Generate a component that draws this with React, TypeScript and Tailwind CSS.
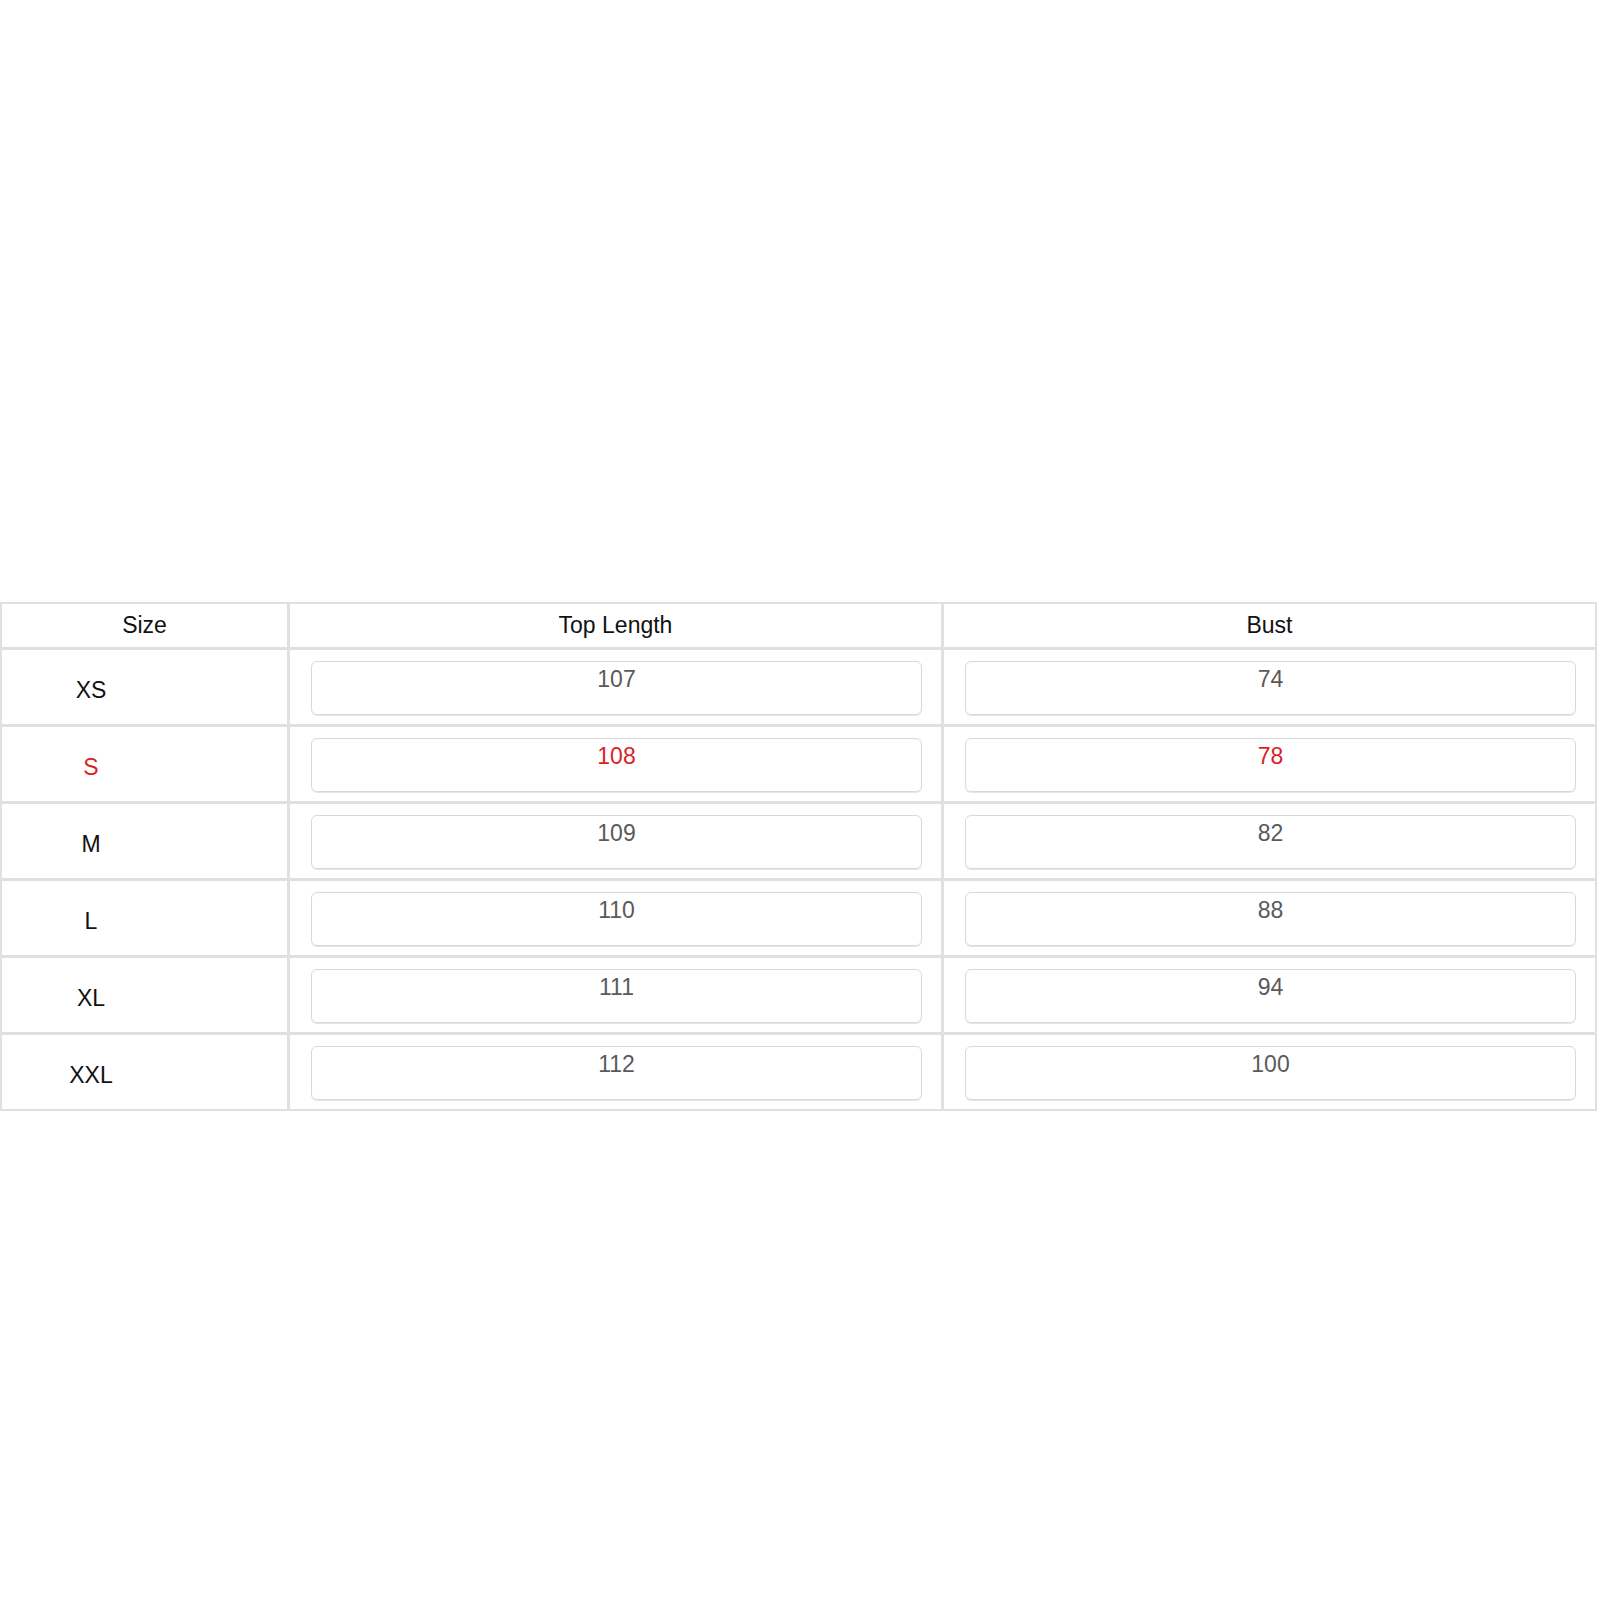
import React from "react";

type Row = { size: string; length: string; bust: string; hl?: boolean };

const rows: Row[] = [
  { size: "XS", length: "107", bust: "74" },
  { size: "S", length: "108", bust: "78", hl: true },
  { size: "M", length: "109", bust: "82" },
  { size: "L", length: "110", bust: "88" },
  { size: "XL", length: "111", bust: "94" },
  { size: "XXL", length: "112", bust: "100" },
];

function ValueBox({ value, hl }: { value: string; hl?: boolean }) {
  return (
    <div className="bg-white h-[74px] pl-[21px] pt-[11px]">
      <div
        className={
          "w-[611px] h-[54px] border border-[#d9d9d9] rounded-[6px] pt-[4px] text-center text-[23px] leading-[26px] shadow-[0_1px_0_#e6e6e6] " +
          (hl ? "text-[#dc1f26]" : "text-[#5a5a5a]")
        }
      >
        {value}
      </div>
    </div>
  );
}

export default function App() {
  return (
    <div
      className="w-[1600px] h-[1600px] bg-white pt-[602px]"
      style={{ fontFamily: '"Liberation Sans", Arial, sans-serif' }}
    >
      <div className="w-[1597px] bg-[#e0e0e0] p-[2px] grid grid-cols-[285px_651px_651px] gap-[3px]">
        <div className="bg-white h-[43px] flex items-center justify-center text-[23px] text-[#111111]">
          Size
        </div>
        <div className="bg-white h-[43px] flex items-center justify-center text-[23px] text-[#111111]">
          Top Length
        </div>
        <div className="bg-white h-[43px] flex items-center justify-center text-[23px] text-[#111111]">
          Bust
        </div>
        {rows.map((r) => (
          <React.Fragment key={r.size}>
            <div className="bg-white h-[74px] flex items-center pt-[7px]">
              <div
                className={
                  "w-[178px] text-center text-[23px] " +
                  (r.hl ? "text-[#dc1f26]" : "text-[#111111]")
                }
              >
                {r.size}
              </div>
            </div>
            <ValueBox value={r.length} hl={r.hl} />
            <ValueBox value={r.bust} hl={r.hl} />
          </React.Fragment>
        ))}
      </div>
    </div>
  );
}
